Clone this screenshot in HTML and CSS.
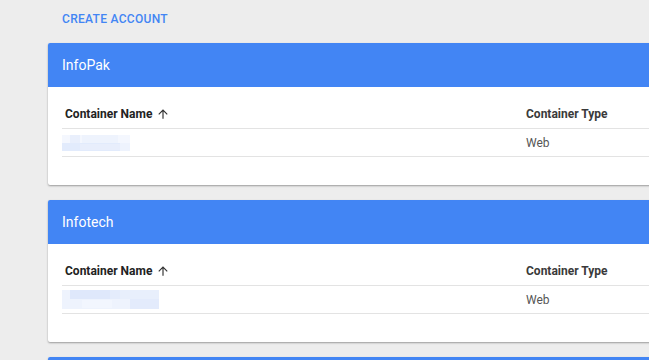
FILE: index.html
```html
<!DOCTYPE html>
<html>
<head>
<meta charset="utf-8">
<link rel="stylesheet" href="styles.css">
</head>
<body>
<div class="page">
  <a class="create-link">CREATE ACCOUNT</a>

  <section class="card">
    <header class="card-head">InfoPak</header>
    <div class="card-body">
      <div class="grid head-row">
        <div class="cell th first">Container Name
          <svg class="sort" viewBox="0 0 24 24"><path d="M4 12l1.41 1.41L11 7.83V20h2V7.83l5.58 5.59L20 12l-8-8-8 8z"/></svg>
        </div>
        <div class="cell th type">Container Type</div>
      </div>
      <div class="grid data-row">
        <div class="cell">
          <svg class="redact redact-a" viewBox="0 0 68 16" preserveAspectRatio="none">
            <rect x="0" y="0" width="68" height="8" fill="#f4f7fe"/>
            <rect x="8" y="0" width="10" height="8" fill="#e9effc"/>
            <rect x="20" y="0" width="36" height="8" fill="#eef3fd"/>
            <rect x="0" y="8" width="68" height="8" fill="#eef3fd"/>
            <rect x="0" y="8" width="58" height="8" fill="#e2ebfc"/>
            <rect x="18" y="9" width="40" height="6" fill="#e8eefc"/>
          </svg>
        </div>
        <div class="cell type td">Web</div>
      </div>
    </div>
  </section>

  <section class="card">
    <header class="card-head">Infotech</header>
    <div class="card-body">
      <div class="grid head-row">
        <div class="cell th first">Container Name
          <svg class="sort" viewBox="0 0 24 24"><path d="M4 12l1.41 1.41L11 7.83V20h2V7.83l5.58 5.59L20 12l-8-8-8 8z"/></svg>
        </div>
        <div class="cell th type">Container Type</div>
      </div>
      <div class="grid data-row">
        <div class="cell">
          <svg class="redact redact-b" viewBox="0 0 97 19" preserveAspectRatio="none">
            <rect x="0" y="0" width="97" height="9" fill="#e4ecfc"/>
            <rect x="0" y="0" width="8" height="9" fill="#eef3fd"/>
            <rect x="8" y="0" width="40" height="9" fill="#dfe8fb"/>
            <rect x="58" y="0" width="39" height="9" fill="#e8effc"/>
            <rect x="0" y="9" width="97" height="10" fill="#eef3fd"/>
            <rect x="68" y="9" width="29" height="10" fill="#e3ebfc"/>
            <rect x="20" y="10" width="30" height="8" fill="#f2f6fe"/>
          </svg>
        </div>
        <div class="cell type td">Web</div>
      </div>
    </div>
  </section>

  <section class="card">
    <header class="card-head"></header>
  </section>
</div>
</body>
</html>
```

FILE: styles.css
```css
html, body {
  margin: 0;
  padding: 0;
  overflow: hidden;
  height: 360px;
}

body {
  background: #ededed;
  font-family: Roboto, "Liberation Sans", Arial, sans-serif;
}

.page {
  padding: 12px 0 0 48px;
}

.create-link {
  display: block;
  margin-left: 14px;
  height: 14px;
  line-height: 14px;
  font-size: 12px;
  font-weight: 500;
  color: #4285f4;
  letter-spacing: 0.3px;
  cursor: pointer;
}

.card {
  margin-top: 17px;
  width: 660px;
  background: #fff;
  border-radius: 2px;
  box-shadow: 0 1px 2px rgba(0, 0, 0, 0.35);
  overflow: hidden;
}

.card + .card {
  margin-top: 15px;
}

.card-head {
  height: 44px;
  line-height: 44px;
  padding-left: 14px;
  background: #4285f4;
  color: #fff;
  font-size: 14px;
}

.card-body {
  padding: 13px 0 28px 14px;
}

.grid {
  display: grid;
  grid-template-columns: 464px 1fr;
  align-items: center;
  border-bottom: 1px solid #e3e3e3;
}

.head-row {
  height: 28px;
}

.data-row {
  height: 27px;
}

.cell {
  font-size: 12px;
  display: flex;
  align-items: center;
}

.th {
  font-weight: 700;
  color: #222;
}

.th.first {
  padding-left: 3px;
}

.th.type {
  color: #3a3a3a;
}

.td {
  color: #555;
}

.sort {
  width: 14px;
  height: 14px;
  margin-left: 4px;
  fill: #333;
}

.redact {
  display: block;
}

.redact-a {
  width: 68px;
  height: 16px;
}

.redact-b {
  width: 97px;
  height: 19px;
}
```
